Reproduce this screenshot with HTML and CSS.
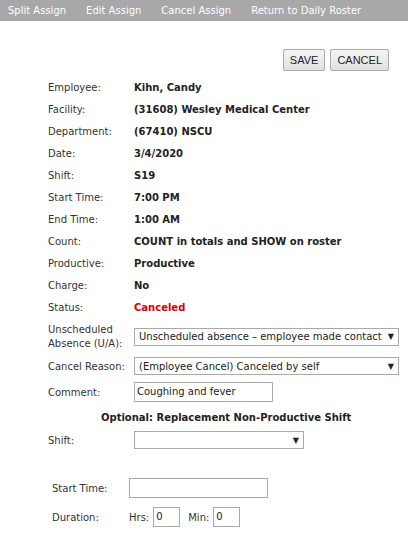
FILE: index.html
```html
<!DOCTYPE html>
<html>
<head>
<meta charset="utf-8">
<link rel="stylesheet" href="styles.css">
</head>
<body>
<nav class="topbar">
  <a class="tab">Split Assign</a>
  <a class="tab">Edit Assign</a>
  <a class="tab">Cancel Assign</a>
  <a class="tab">Return to Daily Roster</a>
</nav>
<div class="actions">
  <button class="btn">SAVE</button>
  <button class="btn">CANCEL</button>
</div>
<div class="details">
  <div class="label">Employee:</div><div class="value">Kihn, Candy</div>
  <div class="label">Facility:</div><div class="value">(31608) Wesley Medical Center</div>
  <div class="label">Department:</div><div class="value">(67410) NSCU</div>
  <div class="label">Date:</div><div class="value">3/4/2020</div>
  <div class="label">Shift:</div><div class="value">S19</div>
  <div class="label">Start Time:</div><div class="value">7:00 PM</div>
  <div class="label">End Time:</div><div class="value">1:00 AM</div>
  <div class="label">Count:</div><div class="value">COUNT in totals and SHOW on roster</div>
  <div class="label">Productive:</div><div class="value">Productive</div>
  <div class="label">Charge:</div><div class="value">No</div>
  <div class="label">Status:</div><div class="value red">Canceled</div>
  <div class="label two">Unscheduled Absence (U/A):</div>
  <div class="field tall"><div class="select wide"><span>Unscheduled absence – employee made contact</span><span class="arrow">▼</span></div></div>
  <div class="label">Cancel Reason:</div>
  <div class="field"><div class="select wide"><span>(Employee Cancel) Canceled by self</span><span class="arrow">▼</span></div></div>
  <div class="label comment-row">Comment:</div>
  <div class="field comment-row"><div class="input comment">Coughing and fever</div></div>
</div>
<div class="optional">Optional: Replacement Non-Productive Shift</div>
<div class="details shiftrow">
  <div class="label">Shift:</div>
  <div class="field"><div class="select narrow"><span></span><span class="arrow">▼</span></div></div>
</div>
<div class="times">
  <div class="label">Start Time:</div>
  <div class="field"><div class="input start"></div></div>
  <div class="label">Duration:</div>
  <div class="field dur">
    <span>Hrs:</span><div class="input small">0</div>
    <span class="minlbl">Min:</span><div class="input small">0</div>
  </div>
</div>
</body>
</html>
```

FILE: styles.css
```css
body {
  margin: 0;
  font-family: "DejaVu Sans", Verdana, sans-serif;
  font-size: 10px;
  color: #333;
  background: #fff;
}
.topbar {
  display: flex;
  background: #a8a8a8;
  height: 21px;
  align-items: center;
  padding-left: 8px;
  gap: 20px;
}
.tab {
  color: #fff;
  font-size: 10px;
}
.actions {
  display: flex;
  justify-content: flex-end;
  gap: 5px;
  padding: 28px 19px 0 0;
  height: 22px;
}
.btn {
  font-family: "Liberation Sans", Arial, sans-serif;
  font-size: 11px;
  color: #222;
  background: linear-gradient(#f4f4f4, #e2e2e2);
  border: 1px solid #a9a9a9;
  border-radius: 2px;
  height: 22px;
  padding: 0 6px;
  margin: 0;
}
.details {
  display: grid;
  grid-template-columns: 86px 270px;
  padding: 5px 0 0 48px;
  align-items: center;
}
.details > div {
  min-height: 22px;
  display: flex;
  align-items: center;
}
.value {
  font-weight: bold;
  color: #222;
}
.red { color: #d00; }
.details > .two {
  line-height: 14px;
  min-height: 37px;
}
.details > .tall { min-height: 37px; }
.details > .comment-row { min-height: 30px; }
.select {
  display: flex;
  justify-content: space-between;
  align-items: center;
  border: 1px solid #a9a9a9;
  height: 16px;
  padding: 0 4px;
  color: #222;
  background: #fff;
}
.arrow { font-size: 8px; }
.wide { width: 255px; }
.narrow { width: 160px; }
.input {
  border: 1px solid #a9a9a9;
  height: 18px;
  line-height: 18px;
  padding: 0 2px;
  color: #222;
}
.comment { width: 133px; }
.optional {
  font-weight: bold;
  color: #222;
  padding-left: 101px;
  height: 22px;
  line-height: 22px;
}
.shiftrow { padding-top: 0; }
.times {
  display: grid;
  grid-template-columns: 77px 200px;
  padding: 27px 0 0 52px;
  row-gap: 9px;
  align-items: center;
}
.times > div { display: flex; align-items: center; }
.start { width: 133px; }
.small { width: 21px; }
.dur span { margin-right: 4px; }
.dur .minlbl { margin-left: 8px; }
```
